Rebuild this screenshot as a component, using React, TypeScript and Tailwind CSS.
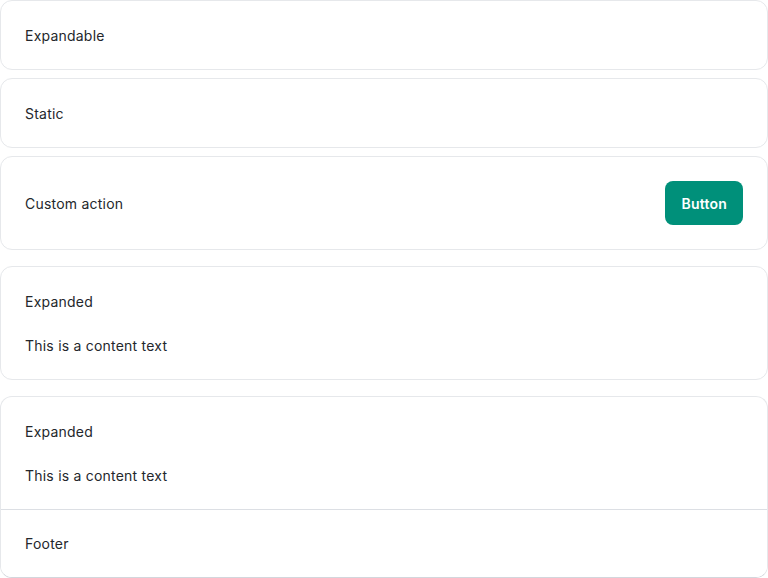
const font = { fontFamily: "Inter, 'Noto Sans', sans-serif" };

function Card({ children, className = "" }: { children: React.ReactNode; className?: string }) {
  return (
    <div className={`overflow-hidden rounded-xl border border-[#e6e8eb] bg-white ${className}`}>
      {children}
    </div>
  );
}

export default function App() {
  return (
    <div
      className="flex w-[768px] flex-col bg-white text-sm leading-5 tracking-[0.22px] text-[#24272c]"
      style={font}
    >
      <Card>
        <div className="px-6 pt-[25px] pb-[23px]">Expandable</div>
      </Card>

      <Card className="mt-2">
        <div className="px-6 pt-[25px] pb-[23px]">Static</div>
      </Card>

      <Card className="mt-2">
        <div className="flex items-center justify-between p-6">
          <span className="pt-0.5">Custom action</span>
          <button
            type="button"
            className="h-11 rounded-lg bg-[#00907a] px-4 pt-[2px] text-sm font-semibold tracking-[0.22px] text-white"
          >
            Button
          </button>
        </div>
      </Card>

      <Card className="mt-4">
        <div className="flex flex-col gap-6 px-6 pt-[25px] pb-[23px]">
          <span>Expanded</span>
          <span>This is a content text</span>
        </div>
      </Card>

      <Card className="mt-4 border-b-[#d3d6dc]">
        <div className="flex flex-col gap-6 px-6 pt-[25px] pb-[23px]">
          <span>Expanded</span>
          <span>This is a content text</span>
        </div>
        <div className="border-t border-[#dcdfe4] bg-white px-6 pt-[24px] pb-[23px]">Footer</div>
      </Card>
    </div>
  );
}
